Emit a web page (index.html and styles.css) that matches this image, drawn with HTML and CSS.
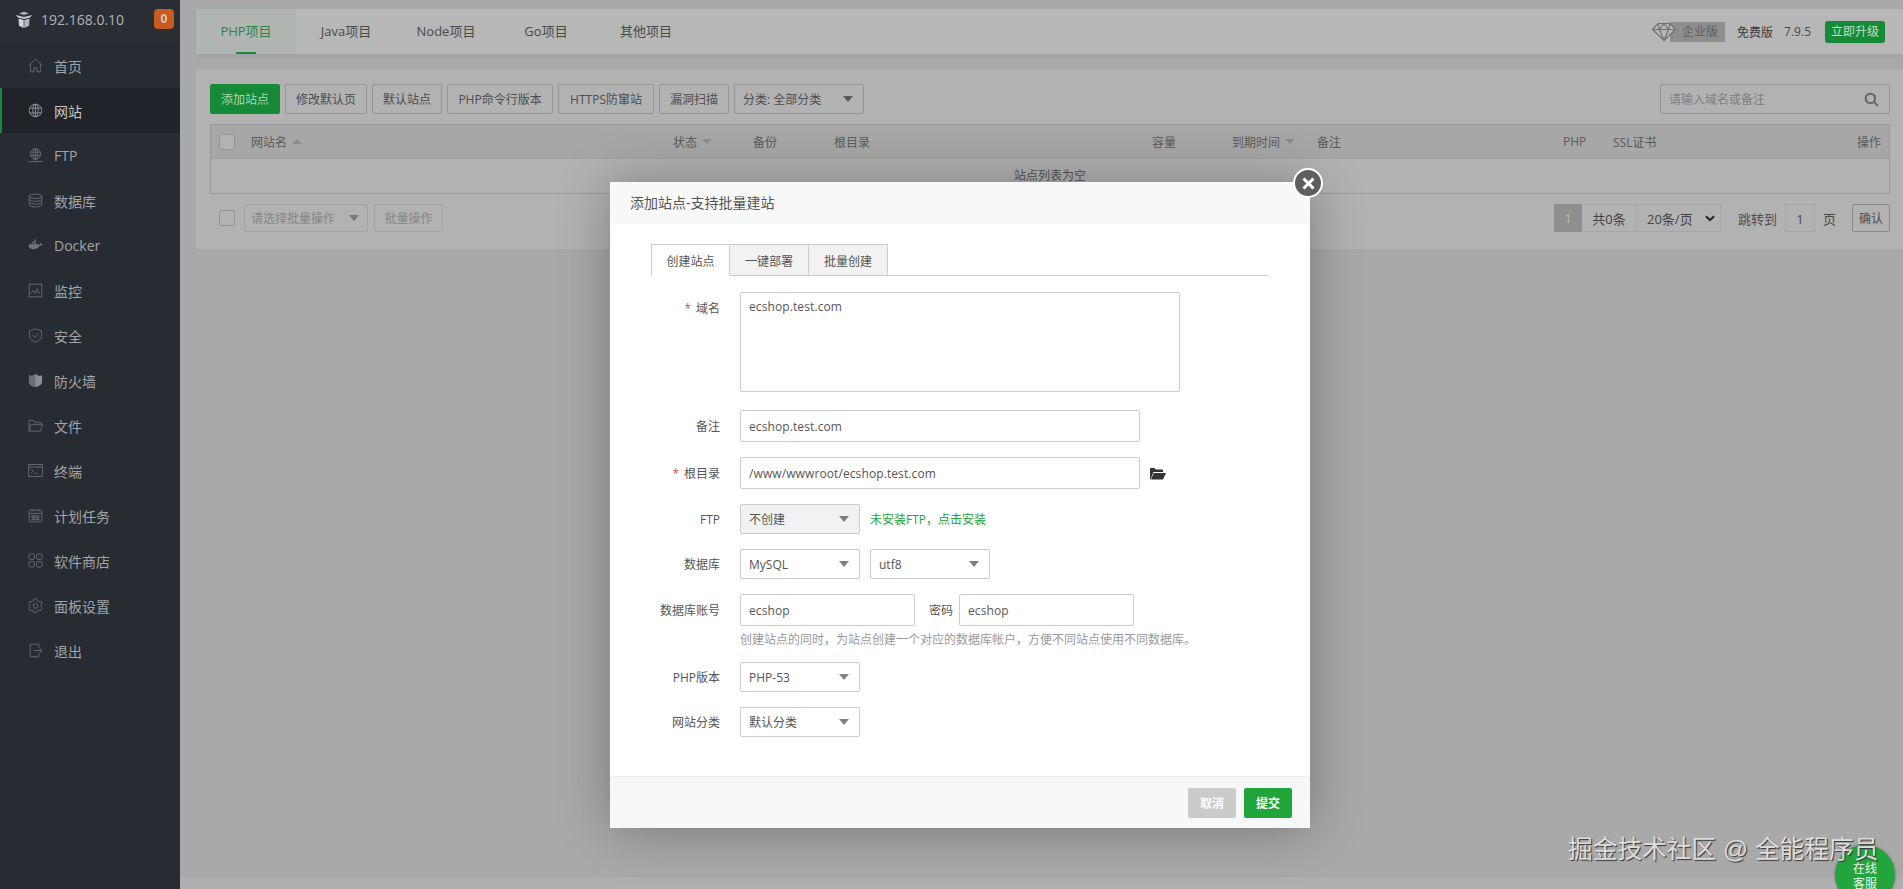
FILE: index.html
```html
<!DOCTYPE html>
<html lang="zh-CN">
<head>
<meta charset="utf-8">
<title>添加站点</title>
<link rel="stylesheet" href="styles.css">
</head>
<body>
<div class="app">
  <aside class="sidebar">
    <div class="brand">
      <svg class="brand-icon" viewBox="0 0 18 19"><path d="M4 3.500 9 1.500l5 2-5 1.500z" fill="#a9abae"/><path d="M1 5l8 2 8-2-2 2.500L9 9 3 7.500z" fill="#c9cbcd"/><path d="M3.500 8.500 8.700 10v8L4 15.800z" fill="#d2d3d5"/><path d="M14.500 8.500 9.300 10v8l4.700-2.200z" fill="#b4b6b9"/></svg>
      <span class="brand-ip">192.168.0.10</span>
      <span class="badge">0</span>
    </div>
    <nav class="nav">
      <a class="nav-item"><svg class="nav-icon" viewBox="0 0 16 16"><path d="M.8 7.800 8 1.200l7.200 6.600M2.800 6.500v8.300h3.600v-4.300h3.200v4.300h3.600V6.500"/></svg>首页</a>
      <a class="nav-item active"><svg class="nav-icon" viewBox="0 0 16 16"><circle cx="8" cy="8" r="6.700"/><ellipse cx="8" cy="8" rx="3" ry="6.700"/><path d="M8 1.300v13.400M1.800 5.500h12.400M1.800 10.500h12.400"/></svg>网站</a>
      <a class="nav-item"><svg class="nav-icon" viewBox="0 0 16 16"><circle cx="8" cy="6.300" r="5.500"/><ellipse cx="8" cy="6.300" rx="2.500" ry="5.500"/><path d="M8 .8v11M2.800 4.500h10.400M2.800 8h10.400M.2 14.500h15.600M6 12.500h4"/></svg>FTP</a>
      <a class="nav-item"><svg class="nav-icon" viewBox="0 0 16 16"><ellipse cx="8" cy="3.500" rx="6.700" ry="2.300"/><path d="M1.300 3.500v9c0 1.300 3 2.300 6.700 2.300s6.700-1 6.700-2.300v-9M1.300 6.500c0 1.300 3 2.300 6.700 2.300s6.700-1 6.700-2.300M1.300 9.500c0 1.300 3 2.300 6.700 2.300s6.700-1 6.700-2.300"/></svg>数据库</a>
      <a class="nav-item"><svg class="nav-icon solid" viewBox="0 0 16 16"><path d="M.5 8.800h11.600c.8 0 1.400-.5 1.700-1.300.6.300 1.500.2 2-.4-.4-.5-1-.7-1.700-.6-.2-.7-.7-1.100-1.200-1.400-.5.700-.6 1.500-.3 2.200H.5c0 2.800 1.700 4.700 5 4.700 3.200 0 5.500-1.300 6.700-3.700z"/><path d="M2 6h1.800v1.800H2zM4.300 6h1.800v1.800H4.300zM6.600 6h1.800v1.800H6.600zM8.900 6h1.800v1.800H8.900zM4.300 3.800h1.800v1.800H4.300zM6.600 3.800h1.800v1.800H6.600zM6.600 1.600h1.800v1.800H6.600z"/></svg>Docker</a>
      <a class="nav-item"><svg class="nav-icon" viewBox="0 0 16 16"><rect x="1.300" y="1.300" width="13.400" height="13.400"/><path d="M3 11.500 5.800 8l1.700 3 2.200-5 1.500 5 1.800-1.500"/></svg>监控</a>
      <a class="nav-item"><svg class="nav-icon" viewBox="0 0 16 16"><path d="M8 1 14.500 3v5.500c0 3-2.700 5.200-6.500 6.500-3.800-1.300-6.500-3.500-6.500-6.500V3z"/><path d="m5 7.500 2.300 2.500L11 5.800"/></svg>安全</a>
      <a class="nav-item"><svg class="nav-icon solid" viewBox="0 0 16 16"><path d="M1 2.500 4 3.300 8 1l4 2.300 3-.8v7c0 2.600-3 4.500-7 5.500-4-1-7-2.900-7-5.500z" fill="#8b8d90"/><path d="M8 1v14c-4-1-7-2.900-7-5.500v-7l3 .8z" fill="#6a6d71"/></svg>防火墙</a>
      <a class="nav-item"><svg class="nav-icon" viewBox="0 0 16 16"><path d="M1 14V2.500h5l1.500 2h6.500v2.300M1 14l2.300-7.200H15.500L13.300 14z"/></svg>文件</a>
      <a class="nav-item"><svg class="nav-icon" viewBox="0 0 16 16"><rect x=".7" y="1.700" width="14.600" height="12.600"/><path d="M.7 4.300h14.600M3.300 6.800l2.200 1.900-2.200 1.800M6.800 11h3"/></svg>终端</a>
      <a class="nav-item"><svg class="nav-icon" viewBox="0 0 16 16"><rect x="1.300" y="2.300" width="13.400" height="12.400" rx="1"/><path d="M1.300 5.800h13.400M4.500 1v2.500M11.500 1v2.500M3.500 8.500h9M3.500 10.500h9M3.500 12.500h9M6 8v5M10 8v5"/></svg>计划任务</a>
      <a class="nav-item"><svg class="nav-icon" viewBox="0 0 16 16"><rect x="1" y="1" width="5.800" height="5.800" rx="1.500"/><rect x="9.200" y="1" width="5.800" height="5.800" rx="1.500"/><rect x="1" y="9.200" width="5.800" height="5.800" rx="1.500"/><rect x="9.200" y="9.200" width="5.800" height="5.800" rx="1.500"/></svg>软件商店</a>
      <a class="nav-item"><svg class="nav-icon" viewBox="0 0 16 16"><path d="M6.500 1h3l.5 2 1.800 1 2-.6 1.500 2.600-1.500 1.400v2l1.500 1.400-1.500 2.600-2-.6-1.800 1-.5 2h-3l-.5-2-1.800-1-2 .6L.7 10.800l1.500-1.400v-2L.7 6l1.500-2.600 2 .6L6 3z"/><circle cx="8" cy="8.400" r="2.500"/></svg>面板设置</a>
      <a class="nav-item"><svg class="nav-icon" viewBox="0 0 16 16"><path d="M11.500 5V1.300H2.300v13.400h9.200V11M6.500 8h8.500M12.500 5.800 15 8l-2.500 2.200"/></svg>退出</a>
    </nav>
  </aside>

  <main class="main">
    <header class="topbar">
      <div class="tabs">
        <a class="tab current">PHP项目</a>
        <a class="tab">Java项目</a>
        <a class="tab">Node项目</a>
        <a class="tab">Go项目</a>
        <a class="tab">其他项目</a>
      </div>
      <div class="top-right">
        <span class="edition">
          <svg class="diamond" viewBox="0 0 26 20"><path d="M7 1.500h12l5.500 6L13 18.500 1.500 7.500zM1.500 7.500h23M8.500 7.500 13 18.500l4.500-11M7 1.500l1.500 6 4.500-6 4.500 6 1.500-6"/></svg>
          <span class="edition-label">企业版</span>
        </span>
        <span class="free">免费版</span>
        <span class="version">7.9.5</span>
        <a class="upgrade">立即升级</a>
      </div>
    </header>

    <section class="card">
      <div class="toolbar">
        <button class="btn primary">添加站点</button>
        <button class="btn">修改默认页</button>
        <button class="btn">默认站点</button>
        <button class="btn btn-php">PHP命令行版本</button>
        <button class="btn btn-https">HTTPS防窜站</button>
        <button class="btn">漏洞扫描</button>
        <div class="select-wrap cat"><select class="select"><option>分类: 全部分类</option></select></div>
        <div class="search">
          <span class="search-hint">请输入域名或备注</span>
          <svg class="search-icon" viewBox="0 0 16 16"><circle cx="6.800" cy="6.800" r="5"/><path d="m10.500 10.500 4.300 4.300"/></svg>
        </div>
      </div>

      <div class="table">
        <div class="thead">
          <span><i class="check"></i></span>
          <span>网站名<i class="sort up"></i></span>
          <span>状态<i class="sort down"></i></span>
          <span>备份</span>
          <span>根目录</span>
          <span>容量</span>
          <span>到期时间<i class="sort down"></i></span>
          <span>备注</span>
          <span>PHP</span>
          <span>SSL证书</span>
          <span class="th-end">操作</span>
        </div>
        <div class="empty">站点列表为空</div>
      </div>

      <div class="table-foot">
        <i class="check"></i>
        <div class="batch-select">请选择批量操作<i class="sort down big"></i></div>
        <button class="btn ghost">批量操作</button>
        <div class="pager">
          <span class="page-now">1</span>
          <span class="page-cell total">共0条</span>
          <span class="page-cell size">20条/页<svg class="chev" viewBox="0 0 10 7"><path d="m1 1.200 4 4 4-4"/></svg></span>
          <span class="jump">跳转到</span>
          <span class="page-input">1</span>
          <span class="page-unit">页</span>
          <button class="btn confirm">确认</button>
        </div>
      </div>
    </section>

    <div class="foot-strip"></div>
  </main>
</div>

<div class="dialog">
  <div class="dialog-title">添加站点-支持批量建站</div>
  <a class="dialog-close"><svg viewBox="0 0 12 12"><path d="m2 2 8 8M10 2l-8 8"/></svg></a>
  <div class="dialog-body">
    <div class="dialog-tabs">
      <a class="dtab on">创建站点</a>
      <a class="dtab">一键部署</a>
      <a class="dtab">批量创建</a>
    </div>
    <div class="row row-area">
      <label class="label"><em>*</em>域名</label>
      <textarea class="area" spellcheck="false">ecshop.test.com</textarea>
    </div>
    <div class="row">
      <label class="label">备注</label>
      <input class="input w400" value="ecshop.test.com">
    </div>
    <div class="row">
      <label class="label"><em>*</em>根目录</label>
      <input class="input w400" value="/www/wwwroot/ecshop.test.com">
      <svg class="folder" viewBox="0 0 16 13"><path d="M0 12V2c0-.6.400-1 1-1h3.500l1.200 1.500h6.300c.6 0 1 .4 1 1V5H3.500L.5 12.500z"/><path d="M3.800 6H16l-3 6.500H1z"/></svg>
    </div>
    <div class="row">
      <label class="label">FTP</label>
      <div class="select-wrap w120 off"><select class="select"><option>不创建</option></select></div>
      <a class="install">未安装FTP，点击安装</a>
    </div>
    <div class="row">
      <label class="label">数据库</label>
      <div class="select-wrap w120"><select class="select"><option>MySQL</option></select></div>
      <div class="select-wrap w120"><select class="select"><option>utf8</option></select></div>
    </div>
    <div class="row row-tight">
      <label class="label">数据库账号</label>
      <input class="input w175" value="ecshop">
      <label class="pw-label">密码</label>
      <input class="input w175" value="ecshop">
    </div>
    <div class="hint">创建站点的同时，为站点创建一个对应的数据库帐户，方便不同站点使用不同数据库。</div>
    <div class="row">
      <label class="label">PHP版本</label>
      <div class="select-wrap w120"><select class="select"><option>PHP-53</option></select></div>
    </div>
    <div class="row">
      <label class="label">网站分类</label>
      <div class="select-wrap w120"><select class="select"><option>默认分类</option></select></div>
    </div>
  </div>
  <div class="dialog-foot">
    <button class="dbtn cancel">取消</button>
    <button class="dbtn submit">提交</button>
  </div>
</div>

<div class="watermark">掘金技术社区 @ 全能程序员</div>
<a class="helper">在线<br>客服</a>
</body>
</html>
```
FILE: styles.css
```css
* { box-sizing: border-box; }
html, body { margin: 0; height: 100%; overflow: hidden; }
body {
  font-family: "Open Sans", "Noto Sans CJK SC", sans-serif;
  font-size: 12px;
  color: #484848;
  background: #a9a9a9;
}
i, em { font-style: normal; }
a { display: block; }
button { font-family: inherit; margin: 0; }
.app { display: flex; height: 889px; }

/* sidebar */
.sidebar { width: 180px; flex: none; background: #272c33; color: #a3a4a6; }
.brand { height: 43px; padding: 0 0 5px 15px; display: flex; align-items: center; background: #292e35; }
.brand-icon { width: 18px; height: 19px; margin-right: 8px; }
.brand-ip { font-size: 14px; color: #b2b3b5; width: 113px; }
.badge { width: 20px; height: 20px; border-radius: 4px; background: #c75a1c; color: #d8c4b6; font-size: 12px; font-weight: 700; text-align: center; line-height: 20px; }
.nav-item { height: 45px; display: flex; align-items: center; padding-left: 28px; font-size: 14px; }
.nav-item.active { background: #20242a; box-shadow: inset 2px 0 0 #178a3a; color: #c6c6c7; }
.nav-icon { width: 15px; height: 15px; margin-right: 11px; fill: none; stroke: #686b6f; stroke-width: 1; }
.nav-icon.solid { fill: #717478; stroke: none; }
.active .nav-icon { stroke: #8e9093; }

/* main */
.main { flex: 1; min-width: 0; padding: 9px 0 0 16px; display: flex; flex-direction: column; background: #a9a9a9; }
.topbar { height: 45px; flex: none; display: flex; justify-content: space-between; align-items: center; background: #b7b7b7; box-shadow: 0 2px 4px rgba(0,0,0,.05); }
.tabs { display: flex; height: 100%; }
.tab { width: 100px; height: 100%; line-height: 45px; text-align: center; font-size: 13px; color: #4a4a4a; position: relative; }
.tab.current { background: #b0b5b1; color: #2f8349; }
.tab.current::after { content: ""; position: absolute; left: 40px; bottom: 0; width: 20px; height: 2px; background: #178a3a; }
.top-right { display: flex; align-items: center; padding-right: 18px; }
.edition { display: flex; align-items: center; margin-right: 12px; }
.diamond { width: 26px; height: 20px; fill: #b7b7b7; stroke: #707070; stroke-width: 1.200; position: relative; z-index: 1; }
.edition-label { width: 55px; height: 20px; margin-left: -7px; background: #8e8e8e; color: #606060; text-align: center; line-height: 20px; padding-left: 5px; }
.free { margin-right: 11px; color: #3a3a3a; }
.version { margin-right: 14px; color: #4a4a4a; }
.upgrade { width: 60px; height: 22px; line-height: 22px; border-radius: 3px; background: #168a37; color: #bfe0c8; text-align: center; }

/* card */
.card { margin-top: 15px; padding: 15px 13px 17px 14px; height: 180px; flex: none; background: #b2b2b2; border-radius: 2px 0 0 2px; }
.toolbar { display: flex; align-items: center; gap: 5px; height: 30px; }
.btn { height: 30px; padding: 0 10px; font-size: 12px; color: #4d4d4d; background: #b2b2b2; border: 1px solid #959595; border-radius: 2px; white-space: nowrap; }
.btn.primary { width: 70px; padding: 0; background: #168a37; border-color: #168a37; color: #a9d7b6; }
.btn.btn-php { width: 106px; padding: 0; }
.btn.btn-https { width: 96px; padding: 0; }
.select-wrap { position: relative; display: block; height: 30px; flex: none; }
.select-wrap::after { content: ""; position: absolute; right: 11px; top: 12px; border: 5px solid transparent; border-top: 6px solid #6a6a6a; border-bottom: 0; pointer-events: none; }
.select { appearance: none; display: block; width: 100%; height: 100%; padding: 0 8px; border: 1px solid #ccc; border-radius: 2px; background: #fff; font: inherit; color: #555; outline: 0; }
.cat { width: 130px; }
.cat .select { background: #b2b2b2; border-color: #959595; color: #4d4d4d; }
.cat::after { border-top-color: #5a5a5a; }
.search { margin-left: auto; width: 230px; height: 30px; display: flex; align-items: center; justify-content: space-between; padding: 0 10px 0 8px; border: 1px solid #959595; border-radius: 2px; color: #7f7f7f; }
.search-icon { width: 15px; height: 15px; fill: none; stroke: #666; stroke-width: 2.200; }

/* table */
.table { margin-top: 10px; border: 1px solid #9a9a9a; height: 70px; }
.thead { height: 34px; display: grid; grid-template-columns: 40px 422px 80px 81px 318px 80px 85px 246px 50px 1fr auto; align-items: center; background: #a7a7a7; border-bottom: 1px solid #a2a2a2; color: #5a5a5a; }
.thead > span { display: flex; align-items: center; }
.thead > span:first-child { padding-left: 8px; }
.th-end { padding-right: 8px; }
.check { display: block; width: 16px; height: 16px; border: 1px solid #959595; border-radius: 2px; background: #b2b2b2; flex: none; }
.sort { display: block; width: 0; height: 0; margin-left: 5px; border: 5px solid transparent; border-top: 0; border-bottom: 5px solid #8c8c8c; }
.sort.down { border-top: 5px solid #8c8c8c; border-bottom: 0; }
.sort.big { border-width: 6px 5.500px 0; border-top-color: #787878; margin-left: auto; }
.empty { height: 34px; line-height: 34px; text-align: center; color: #555; }

/* table footer */
.table-foot { margin-top: 10px; height: 28px; display: flex; align-items: center; }
.table-foot > .check { margin: 0 9px; }
.batch-select { width: 124px; height: 28px; display: flex; align-items: center; padding: 0 8px 0 6px; border: 1px solid #a3a3a3; border-radius: 2px; color: #858585; }
.btn.ghost { height: 28px; width: 69px; padding: 0; margin-left: 6px; color: #878787; border-color: #a3a3a3; }
.pager { margin-left: auto; display: flex; align-items: center; height: 28px; font-size: 13px; }
.page-now { width: 28px; height: 28px; line-height: 28px; text-align: center; background: #8f8f8f; color: #b9b9b9; }
.page-cell { height: 28px; display: flex; align-items: center; border: 1px solid #a6a6a6; border-left: 0; color: #444; }
.total { width: 55px; justify-content: center; }
.size { width: 84px; padding-left: 10px; justify-content: space-between; padding-right: 5px; }
.chev { width: 10px; height: 7px; fill: none; stroke: #222; stroke-width: 2; }
.jump { margin-left: 17px; width: 47px; color: #4f4f4f; }
.page-input { width: 30px; height: 28px; line-height: 28px; text-align: center; border: 1px solid #a6a6a6; }
.page-unit { margin-left: 8px; width: 29px; }
.btn.confirm { width: 38px; height: 28px; padding: 0; border-color: #8a8a8a; }
.foot-strip { margin: auto 0 0 -16px; height: 12px; background: #afafaf; flex: none; }

/* dialog */
.dialog { position: absolute; left: 610px; top: 182px; width: 700px; height: 646px; display: flex; flex-direction: column; background: #fff; box-shadow: 1px 1px 50px rgba(0,0,0,.3); color: #555; }
.dialog-title { height: 42px; flex: none; line-height: 42px; padding-left: 20px; font-size: 14px; color: #555; background: #f8f8f8; }
.dialog-close { position: absolute; right: -13px; top: -14px; width: 30px; height: 30px; border-radius: 50%; background: #5e5e5e; border: 2px solid #fff; display: flex; align-items: center; justify-content: center; }
.dialog-close svg { width: 15px; height: 15px; fill: none; stroke: #fff; stroke-width: 2.500; }
.dialog-body { flex: 1; padding: 20px 0 0 0; }
.dialog-tabs { display: flex; height: 32px; margin: 0 41px; border-bottom: 1px solid #ccc; }
.dtab { width: 79px; height: 32px; line-height: 33px; text-align: center; border: 1px solid #ccc; border-left-width: 0; background: #f2f2f2; color: #555; }
.dtab.on { border-left-width: 1px; background: #fff; border-bottom-color: #fff; }
.row { display: flex; align-items: center; margin-bottom: 15px; }
.row-area { align-items: flex-start; margin-top: 16px; margin-bottom: 18px; }
.row-area .label { line-height: 33px; }
.row-tight { margin-bottom: 0; }
.label { width: 110px; margin-right: 20px; text-align: right; flex: none; color: #555; }
.label em { color: #d9534f; margin-right: 5px; }
.input, .area { display: block; height: 32px; padding: 0 8px; border: 1px solid #ccc; border-radius: 2px; font: inherit; letter-spacing: .1px; color: #555; outline: 0; background: #fff; }
.area { width: 440px; height: 100px; padding: 5px 8px; resize: none; line-height: 18px; }
.w400 { width: 400px; }
.w175 { width: 175px; }
.w120 { width: 120px; margin-right: 10px; }
.off .select { background: #f2f2f2; }
.select-wrap.w120::after { border-top-color: #808080; }
.folder { width: 16px; height: 13px; margin-left: 10px; fill: #333; }
.install { color: #20a53a; }
.pw-label { width: 44px; text-align: right; padding-right: 6px; }
.hint { height: 36px; margin-left: 130px; padding-top: 4px; line-height: 20px; color: #999; }
.dialog-foot { height: 52px; flex: none; display: flex; justify-content: flex-end; align-items: center; gap: 8px; padding-right: 18px; background: #f6f8f8; border-top: 1px solid #eef0f0; }
.dbtn { width: 48px; height: 30px; padding: 0; border: 0; border-radius: 2px; font-size: 12px; font-weight: 700; color: #fff; }
.cancel { background: #cbcbcb; }
.submit { background: #20a53a; }

/* overlays */
.watermark { position: absolute; left: 1568px; top: 838px; font-family: "Liberation Sans", "Noto Sans CJK SC", sans-serif; font-size: 24.700px; line-height: 24px; white-space: nowrap; color: #dedede; text-shadow: 1px 1px 1px #333; z-index: 2; }
.helper { position: absolute; left: 1835px; top: 845px; width: 60px; height: 60px; padding-top: 16px; border-radius: 50%; background: #22a53d; color: #eaf6ec; text-align: center; font-size: 12px; line-height: 15px; box-shadow: 0 0 3px rgba(0,0,0,.4); }
```
